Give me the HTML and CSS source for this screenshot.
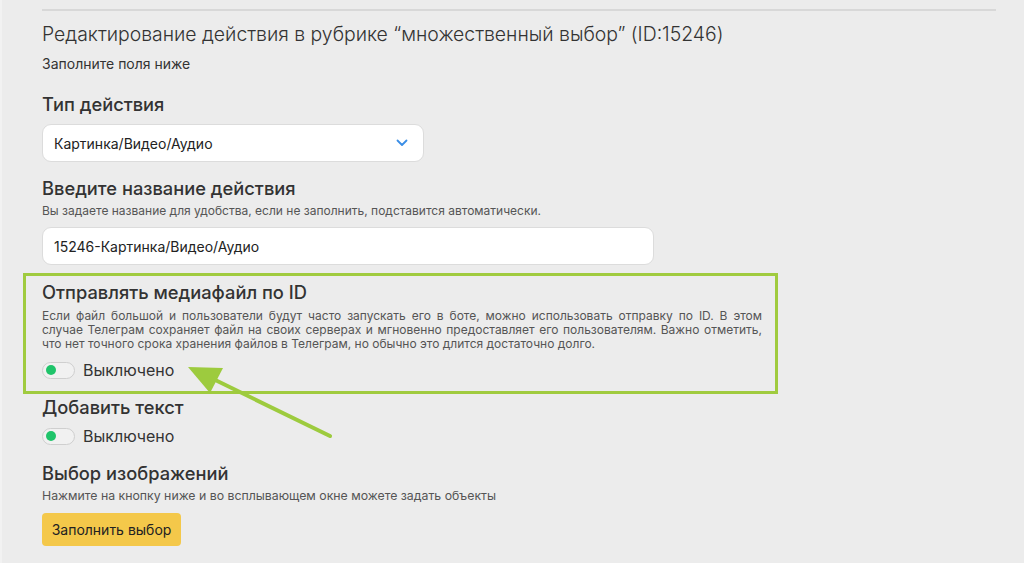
FILE: index.html
```html
<!DOCTYPE html>
<html lang="ru">
<head>
<meta charset="utf-8">
<title>Редактирование действия</title>
<link rel="stylesheet" href="styles.css">
</head>
<body>
<div class="page">
  <div class="divider"></div>
  <h1 class="title">Редактирование действия в рубрике “множественный выбор” (ID:15246)</h1>
  <p class="hint-top">Заполните поля ниже</p>

  <h2 class="label label-type">Тип действия</h2>
  <div class="select">
    <span>Картинка/Видео/Аудио</span>
    <svg class="chevron" width="12" height="8" viewBox="0 0 12 8"><path d="M1.5 1.5 L6 6 L10.5 1.5" fill="none" stroke="#3a8ee6" stroke-width="1.8" stroke-linecap="round" stroke-linejoin="round"/></svg>
  </div>

  <h2 class="label label-name">Введите название действия</h2>
  <p class="hint">Вы задаете название для удобства, если не заполнить, подставится автоматически.</p>
  <div class="input">15246-Картинка/Видео/Аудио</div>

  <div class="highlight">
    <h2 class="label label-media">Отправлять медиафайл по ID</h2>
    <p class="para">Если файл большой и пользователи будут часто запускать его в боте, можно использовать отправку по ID. В этом случае Телеграм сохраняет файл на своих серверах и мгновенно предоставляет его пользователям. Важно отметить, что нет точного срока хранения файлов в Телеграм, но обычно это длится достаточно долго.</p>
    <div class="toggle-row toggle-row1">
      <span class="toggle"><span class="dot"></span></span>
      <span class="toggle-text">Выключено</span>
    </div>
  </div>

  <h2 class="label label-text">Добавить текст</h2>
  <div class="toggle-row toggle-row2">
    <span class="toggle"><span class="dot"></span></span>
    <span class="toggle-text">Выключено</span>
  </div>

  <h2 class="label label-images">Выбор изображений</h2>
  <p class="hint hint-images">Нажмите на кнопку ниже и во всплывающем окне можете задать объекты</p>
  <button class="btn">Заполнить выбор</button>
</div>

<svg class="arrow" width="1024" height="563" viewBox="0 0 1024 563">
  <line x1="328" y1="436" x2="203" y2="375" stroke="#9dcb3e" stroke-width="4" stroke-linecap="round"/>
  <polygon points="186,367 221,368 208,393" fill="#9dcb3e"/>
</svg>
</body>
</html>
```

FILE: styles.css
```css
* { box-sizing: border-box; }
html, body { margin: 0; padding: 0; }
body {
  background: #ececec;
  font-family: Inter, "Noto Sans", "Liberation Sans", sans-serif;
  color: #333;
  width: 1024px;
  height: 563px;
  overflow: hidden;
  position: relative;
  border-left: 2px solid #f2f2f2;
}
.page {
  padding: 9px 28px 0 40px;
}
.divider {
  height: 2px;
  background: #d8d8d8;
}
.title {
  margin: 10px 0 0;
  font-size: 19.4px;
  font-weight: 300;
  line-height: 26px;
  color: #333;
}
.hint-top {
  margin: 9px 0 0;
  font-size: 14px;
  line-height: 16px;
  color: #333;
}
.label {
  margin: 0;
  font-size: 18.3px;
  font-weight: 500;
  line-height: 22px;
  color: #333;
}
.label-type { margin-top: 21px; }
.select, .input {
  background: #fff;
  border: 1px solid #dcdcdc;
  border-radius: 9px;
  height: 38px;
  display: flex;
  align-items: center;
  padding: 0 11px;
  font-size: 14px;
  color: #222;
}
.select {
  width: 382px;
  margin-top: 9px;
  justify-content: space-between;
  padding-right: 15px;
}
.label-name { margin-top: 15px; }
.hint {
  margin: 4px 0 0;
  font-size: 12px;
  line-height: 15px;
  color: #555;
}
.hint-images { font-size: 12.3px; }
.input {
  width: 612px;
  margin-top: 9px;
}
.highlight {
  margin: 8px 0 0 -19px;
  width: 755px;
  border: 3px solid #a0cb3f;
  padding: 5px 10px 11px 16px;
}
.label-media { margin: 0; }
.para {
  margin: 6px 0 0;
  width: 720px;
  font-size: 12px;
  line-height: 14px;
  color: #555;
  text-align: justify;
}
.toggle-row {
  display: flex;
  align-items: center;
  height: 20px;
}
.toggle-row1 { margin-top: 9px; }
.toggle {
  width: 33px;
  height: 17px;
  border: 1.5px solid #cfcfcf;
  border-radius: 9px;
  display: flex;
  align-items: center;
  padding-left: 3px;
  background: #f1f1f1;
}
.dot {
  width: 10px;
  height: 10px;
  border-radius: 50%;
  background: #1fc46a;
}
.toggle-text {
  margin-left: 8px;
  font-size: 16px;
  color: #333;
}
.label-text { margin-top: 2px; }
.toggle-row2 { margin-top: 8px; }
.label-images { margin-top: 16px; }
.btn {
  display: block;
  margin-top: 10px;
  width: 139px;
  height: 33px;
  border: none;
  border-radius: 4px;
  background: #f4c84a;
  font-family: Inter, "Noto Sans", "Liberation Sans", sans-serif;
  font-size: 14px;
  color: #222;
  padding: 0;
}
.arrow {
  position: absolute;
  left: 0;
  top: 0;
  pointer-events: none;
}
```
